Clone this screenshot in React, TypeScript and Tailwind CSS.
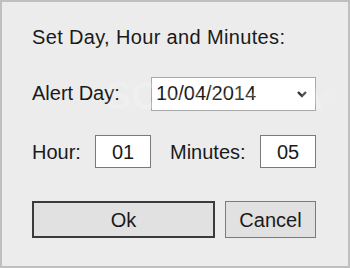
import React from 'react'

const font = { fontFamily: '"Liberation Sans", Arial, sans-serif' }

export default function App() {
  return (
    <div
      className="relative w-[350px] h-[268px] bg-[#ececec] border-2 border-[#bfbfbf] pl-[30px] pt-[24px] text-[20px] leading-[22px] text-[#1a1a1a] overflow-hidden"
      style={font}
    >
      <div className="tracking-[0.35px]">Set Day, Hour and Minutes:</div>

      <div className="mt-[29px] flex items-center w-[284px] justify-between">
        <span className="-mt-[3px]">Alert Day:</span>
        <div className="w-[165px] h-[34px] bg-white border border-[#a9a9a9] flex items-center justify-between pl-[4px] pr-[8px]">
          <span className="-mt-[2px]">10/04/2014</span>
          <svg width="10" height="7" viewBox="0 0 10 7" className="mt-[1px]">
            <polyline points="1,1 5,5 9,1" fill="none" stroke="#333" strokeWidth="2.4" />
          </svg>
        </div>
      </div>

      <div className="mt-[24px] flex items-center">
        <span className="w-[63px]">Hour:</span>
        <div className="w-[56px] h-[33px] bg-white border border-[#7a7a7a] flex items-center justify-center">01</div>
        <span className="ml-[19px] w-[90px]">Minutes:</span>
        <div className="w-[56px] h-[33px] bg-white border border-[#7a7a7a] flex items-center justify-center">05</div>
      </div>

      <div className="mt-[33px] flex gap-[10px]">
        <button className="w-[183px] h-[37px] bg-[#e1e1e1] border-2 border-[#3b3b3b] flex items-center justify-center">Ok</button>
        <button className="w-[91px] h-[37px] bg-[#e1e1e1] border-[1.5px] border-[#7a7a7a] flex items-center justify-center">Cancel</button>
      </div>

      <div
        className="absolute left-[104px] top-[72px] text-[38px] leading-[44px] font-bold text-white/20 pointer-events-none select-none"
        style={{ fontFamily: '"Liberation Sans", sans-serif' }}
      >
        SOFTPEDIA<span className="text-[10px] align-top">®</span>
      </div>
    </div>
  )
}
